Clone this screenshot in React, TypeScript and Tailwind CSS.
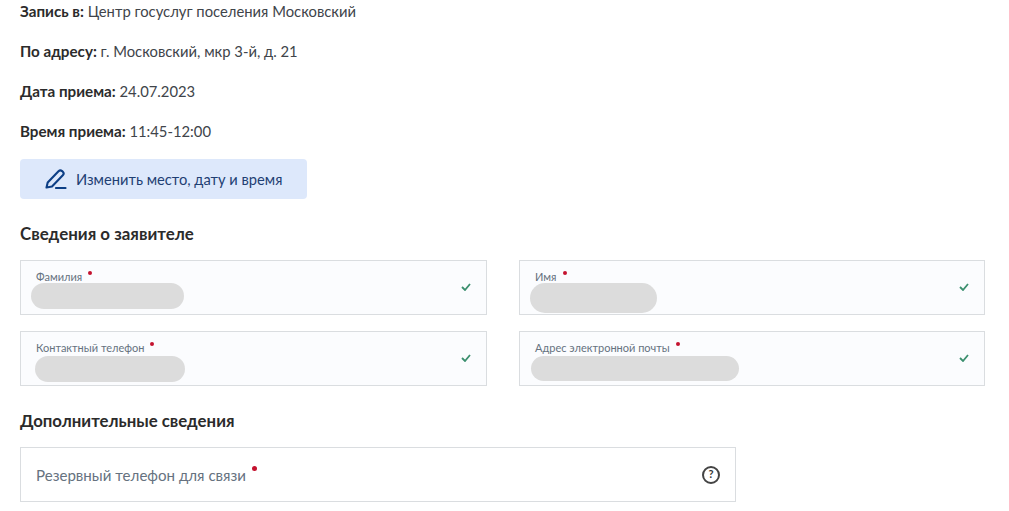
const summary = [
  { label: "Запись в:", value: "Центр госуслуг поселения Московский" },
  { label: "По адресу:", value: "г. Московский, мкр 3-й, д. 21" },
  { label: "Дата приема:", value: "24.07.2023" },
  { label: "Время приема:", value: "11:45-12:00" },
]

function Dot() {
  return <span className="ml-[6px] mt-[-9px] h-[4px] w-[4px] rounded-full bg-[#c4122f]" />
}

function Check() {
  return (
    <svg width="10" height="8" viewBox="0 0 10 8" fill="none" className="mr-[15px] mt-[-1px] shrink-0">
      <path d="M1 4l3 3 5-6" stroke="#3b8f6e" strokeWidth="1.8" />
    </svg>
  )
}

function Pen() {
  return (
    <svg width="22" height="20" viewBox="0 0 22 20" fill="none" stroke="#0d3f86" strokeWidth="2.1" strokeLinejoin="round" strokeLinecap="round">
      <path d="M1.5 18.5l1.2-5L13.5 2.2c1-1 2.6-1 3.6-.1l.7.7c1 1 1 2.5 0 3.5L7 17.5z" />
      <path d="M11 19h9.5" />
    </svg>
  )
}

function Field({ label, ml, blob }: { label: string; ml: string; blob: string }) {
  return (
    <div className="flex h-[55px] items-center justify-between border border-[#dadde0] bg-[#fbfcfe]">
      <div className={`self-start pt-[10px] ${ml}`}>
        <div className="flex h-[12px] items-center text-[11px] leading-[12px] text-[#66727f]">
          {label}
          <Dot />
        </div>
        <div className={`rounded-full bg-[#dcdcdc] ${blob}`} />
      </div>
      <Check />
    </div>
  )
}

export default function App() {
  return (
    <div className="h-[511px] w-[1009px] overflow-hidden bg-white pl-[20px] pt-[1px] font-['Lato','Noto_Sans',sans-serif] text-[#2b2b2b]">
      <div className="flex flex-col gap-[20px]">
        {summary.map((s) => (
          <p key={s.label} className="h-[20px] text-[14.8px] leading-[20px]">
            <b className="text-[15.2px] font-bold">{s.label}</b> <span className="text-[#40444a]">{s.value}</span>
          </p>
        ))}
      </div>

      <button className="mt-[18px] flex h-[40px] w-[287px] items-center rounded-[4px] bg-[#dde8fb] pl-[25px] text-[14.7px] text-[#1f3f73]">
        <Pen />
        <span className="ml-[9px]">Изменить место, дату и время</span>
      </button>

      <h3 className="mt-[24px] text-[16.9px] leading-[22px] font-bold text-[#2b2b2b]">Сведения о заявителе</h3>

      <div className="mt-[15px] grid w-[965px] grid-cols-[467px_466px] gap-x-[32px] gap-y-[16px]">
        <Field label="Фамилия" ml="pl-[15px]" blob="ml-[-5px] h-[26px] w-[153px]" />
        <Field label="Имя" ml="pl-[15px]" blob="ml-[-5px] h-[30px] w-[127px]" />
        <Field label="Контактный телефон" ml="pl-[15px]" blob="ml-[-1px] mt-[2px] h-[26px] w-[150px]" />
        <Field label="Адрес электронной почты" ml="pl-[15px]" blob="ml-[-4px] mt-[2px] h-[25px] w-[208px]" />
      </div>

      <h3 className="mt-[24px] text-[16.8px] leading-[22px] font-bold text-[#2b2b2b]">Дополнительные сведения</h3>

      <div className="mt-[15px] flex h-[55px] w-[716px] items-center justify-between border border-[#dadde0] pl-[15px] pr-[15px]">
        <div className="mt-[2px] flex items-center text-[15.1px] text-[#66727f]">
          Резервный телефон для связи
          <span className="ml-[6px] mt-[-13px] h-[5px] w-[5px] rounded-full bg-[#c4122f]" />
        </div>
        <div className="flex h-[18px] w-[18px] items-center justify-center rounded-full border-[2px] border-[#444] text-[11px] font-bold text-[#333]">?</div>
      </div>
    </div>
  )
}
